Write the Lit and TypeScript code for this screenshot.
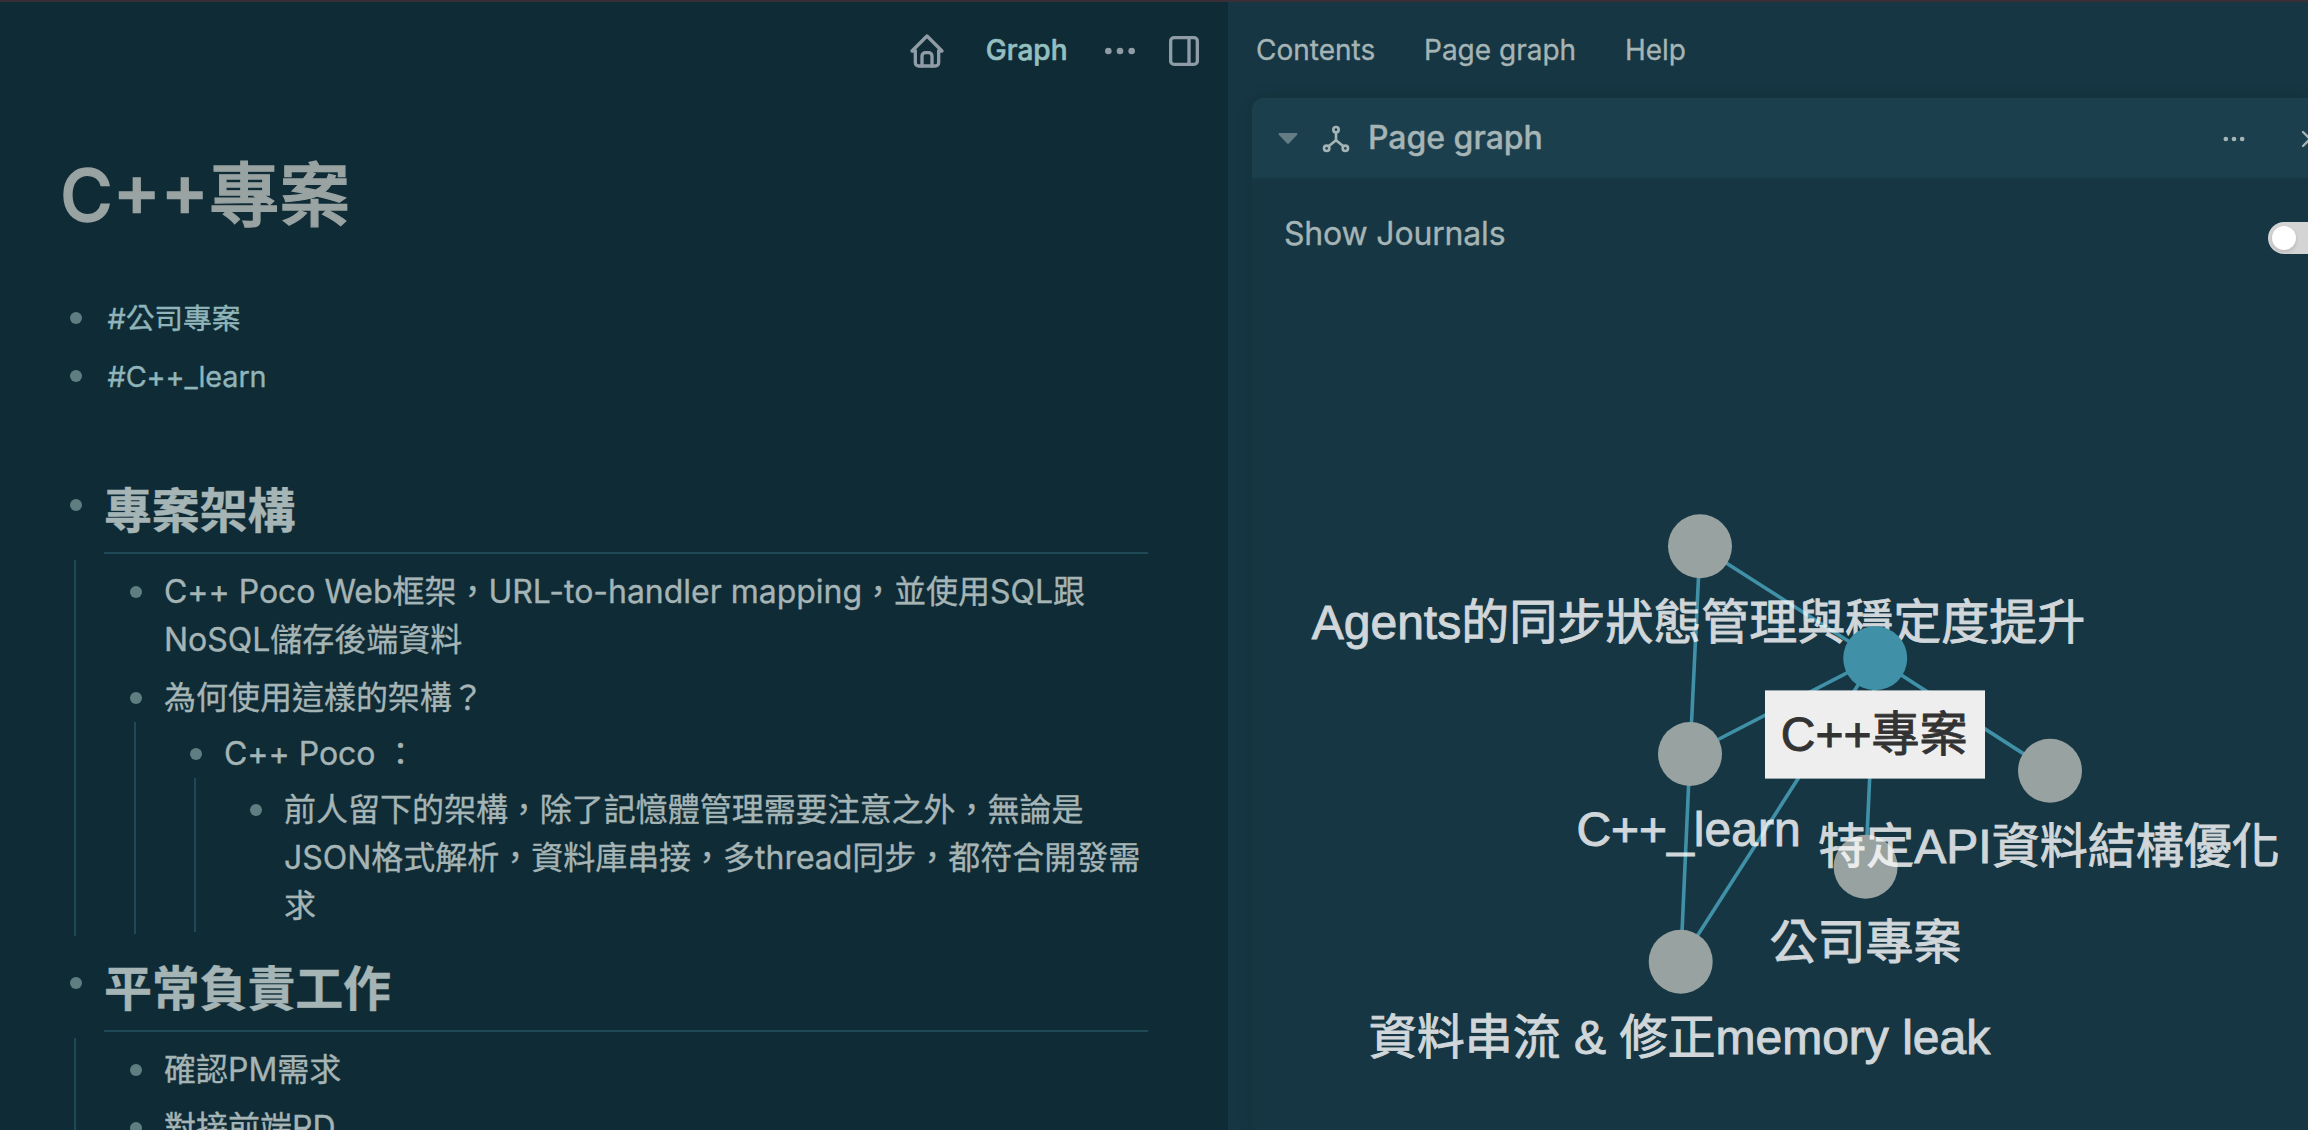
import { LitElement, html, svg, css, nothing, TemplateResult } from "lit";
import { customElement, property } from "lit/decorators.js";

interface Block {
  lines: string[];
  kind?: "text" | "tag" | "heading" | "blank";
  children?: Block[];
}

const BLOCKS: Block[] = [
  { lines: ["#公司專案"], kind: "tag" },
  { lines: ["#C++_learn"], kind: "tag" },
  { lines: [""], kind: "blank" },
  {
    lines: ["專案架構"],
    kind: "heading",
    children: [
      { lines: ["C++ Poco Web框架，URL-to-handler mapping，並使用SQL跟", "NoSQL儲存後端資料"] },
      {
        lines: ["為何使用這樣的架構？"],
        children: [
          {
            lines: ["C++ Poco ："],
            children: [
              {
                lines: [
                  "前人留下的架構，除了記憶體管理需要注意之外，無論是",
                  "JSON格式解析，資料庫串接，多thread同步，都符合開發需",
                  "求",
                ],
              },
            ],
          },
        ],
      },
    ],
  },
  {
    lines: ["平常負責工作"],
    kind: "heading",
    children: [{ lines: ["確認PM需求"] }, { lines: ["對接前端RD"] }],
  },
];

const ICONS: Record<string, TemplateResult> = {
  home: svg`<path d="M5 12H3l9-9 9 9h-2"/><path d="M5 12v7a2 2 0 0 0 2 2h10a2 2 0 0 0 2-2v-7"/><path d="M9 21v-6a2 2 0 0 1 2-2h2a2 2 0 0 1 2 2v6"/>`,
  dots: svg`<circle cx="5" cy="12" r="1"/><circle cx="12" cy="12" r="1"/><circle cx="19" cy="12" r="1"/>`,
  sidebar: svg`<rect x="4" y="4" width="16" height="16" rx="2"/><path d="M15 4v16"/>`,
  hierarchy: svg`<circle cx="12" cy="5" r="2"/><circle cx="5" cy="19" r="2"/><circle cx="19" cy="19" r="2"/><path d="M6.5 17.5 12 13l5.5 4.5M12 7v6"/>`,
  close: svg`<path d="M18 6 6 18M6 6l12 12"/>`,
};

@customElement("line-icon")
class LineIcon extends LitElement {
  @property() name = "dots";
  static styles = css`
    :host { display: block; flex: none; }
    .glyph {
      display: block; width: 100%; height: 100%; fill: none; stroke: currentColor;
      stroke-width: 2; stroke-linecap: round; stroke-linejoin: round;
    }
  `;
  render() {
    return html`<svg class="glyph" viewBox="0 0 24 24">${ICONS[this.name]}</svg>`;
  }
}

interface GraphNode { id: string; x: number; y: number; labelX: number; label: string; }

const NODES: GraphNode[] = [
  { id: "agents", x: 1700, y: 546.3, labelX: 1698.5, label: "Agents的同步狀態管理與穩定度提升" },
  { id: "learn", x: 1690, y: 754, labelX: 1688.5, label: "C++_learn" },
  { id: "api", x: 2050, y: 770.8, labelX: 2049, label: "特定API資料結構優化" },
  { id: "company", x: 1865.6, y: 866.7, labelX: 1865.5, label: "公司專案" },
  { id: "stream", x: 1680.7, y: 961.7, labelX: 1679.5, label: "資料串流 & 修正memory leak" },
];
const FOCUS: GraphNode = { id: "focus", x: 1875.2, y: 658.3, labelX: 1874.2, label: "C++專案" };
const EDGES = [
  ["agents", "focus"], ["agents", "learn"], ["learn", "focus"], ["api", "focus"],
  ["company", "focus"], ["stream", "focus"], ["stream", "learn"],
];

@customElement("page-graph")
class PageGraph extends LitElement {
  static styles = css`
    :host { display: block; overflow: hidden; }
    .canvas { display: block; width: 1056px; height: 842px; }
    .edge { stroke: #4091a7; stroke-width: 3.6; }
    .node { fill: #98a2a1; }
    .node-focus { fill: #4091a7; }
    .label {
      font: 48px "Liberation Sans", "Noto Sans CJK TC", sans-serif;
      text-anchor: middle; fill: #ffffff; stroke: #ffffff; stroke-width: 0.9; opacity: 0.8;
    }
    .label-box { fill: #eeeeee; }
    .label-focus { fill: #333333; stroke: #333333; opacity: 1; }
  `;
  render() {
    const find = (id: string) => [...NODES, FOCUS].find((n) => n.id === id)!;
    return html`<svg class="canvas" viewBox="1252 288 1056 842">
      ${EDGES.map(([a, b]) => {
        const p = find(a), q = find(b);
        return svg`<line class="edge" x1=${p.x} y1=${p.y} x2=${q.x} y2=${q.y}/>`;
      })}
      ${NODES.map((n) => svg`<circle class="node" cx=${n.x} cy=${n.y} r="32"/>`)}
      ${NODES.map((n) => svg`<text class="label" x=${n.labelX} y=${n.y + 92.4}>${n.label}</text>`)}
      <circle class="node-focus" cx=${FOCUS.x} cy=${FOCUS.y} r="32"/>
      <rect class="label-box" x="1765" y="690.4" width="220" height="88.2"/>
      <text class="label label-focus" x=${FOCUS.labelX} y=${FOCUS.y + 92.4}>${FOCUS.label}</text>
    </svg>`;
  }
}

@customElement("app-root")
class AppRoot extends LitElement {
  static styles = css`
    :host {
      display: grid; grid-template-columns: 1228px 1080px; width: 2308px; height: 1130px;
      box-sizing: border-box; border-top: 2px solid #382f36; overflow: hidden;
      background: #0f2b35; color: #a5b4b5;
      font: 32px/48px Inter, "Noto Sans CJK TC", sans-serif;
      -webkit-text-stroke: 0.35px currentColor;
    }
    .main { overflow: hidden; }
    .toolbar {
      display: flex; align-items: center; justify-content: flex-end; box-sizing: border-box;
      height: 98px; padding-right: 24px; color: #8f9ca5;
    }
    .tool { width: 40px; height: 40px; }
    .graph-link { margin: -2px 32.5px 0 38.5px; color: #93bfc1; font-size: 28px; font-weight: 500; -webkit-text-stroke-width: 0.6px; }
    .dots-tool { margin-right: 24px; }
    .page-title {
      margin: 0; padding: 50px 0 0 60px; height: 136px; font-size: 72px; line-height: 90px;
      font-weight: 500; color: #98a3a2; white-space: nowrap;
      -webkit-text-stroke: 1.3px currentColor;
    }
    .title-cjk { font-size: 70.5px; }
    .outline { width: 1104px; padding-left: 44px; }
    .block { padding: 8px 0 2px; }
    .row { display: flex; }
    .gutter { flex: none; width: 60px; height: 48px; display: flex; align-items: center; justify-content: center; }
    .bullet { width: 12px; height: 12px; margin-left: 4px; border-radius: 50%; background: #5f7e82; }
    .content { flex: 1; white-space: nowrap; letter-spacing: -0.02px; }
    .line { height: 48px; }
    .tag { margin-left: 3.5px; font-size: 28.8px; color: #8fb5ba; letter-spacing: -0.1px; }
    .heading {
      margin: 0 0 6px; height: 84px; border-bottom: 2px solid #204957; font-size: 48px;
      line-height: 86px; font-weight: 700; letter-spacing: -0.2px;
    }
    .gutter-heading { padding-top: 13px; }
    .children { margin-left: 30px; border-left: 2px solid #204957; padding-left: 28px; }
    .sidebar { overflow: hidden; background: #153642; }
    .tabs { display: flex; align-items: center; height: 96px; gap: 48.8px; padding-left: 28px; font-size: 28px; white-space: nowrap; }
    .card { margin-left: 24px; height: 1032px; border-radius: 12px 0 0 0; box-shadow: 0 0 18px rgba(0, 0, 0, 0.07); overflow: hidden; }
    .card-wrap { width: 1110px; }
    .card-head { display: flex; align-items: center; height: 80px; background: #1c3f4e; }
    .caret { width: 20px; height: 11px; margin-left: 26px; fill: #647d84; }
    .kind { width: 32px; height: 32px; margin: 2px 16px 0 22px; }
    .card-title { flex: 1; font-weight: 500; letter-spacing: -0.02px; }
    .small { width: 28px; height: 28px; margin-top: 1px; }
    .card-more { margin-right: 48px; }
    .card-close { margin-right: 38px; }
    .setting { display: flex; justify-content: space-between; height: 110px; box-sizing: border-box; padding: 32px 12px 0 32px; letter-spacing: -0.18px; }
    .switch { width: 64px; height: 32px; box-sizing: border-box; margin: 12px 18px 0 0; padding: 4px; border-radius: 16px; background: #d4d4d4; }
    .knob { width: 24px; height: 24px; border-radius: 50%; background: #ffffff; box-shadow: 0 2px 4px rgba(0, 0, 0, 0.14); }
  `;

  private block(b: Block): TemplateResult {
    const heading = b.kind === "heading";
    return html`<div class="block">
      <div class="row">
        <div class="gutter ${heading ? "gutter-heading" : ""}">
          ${b.kind === "blank" ? nothing : html`<div class="bullet"></div>`}
        </div>
        <div class="content">
          ${heading
            ? html`<h2 class="heading">${b.lines[0]}</h2>`
            : b.lines.map((l) => html`<div class="line">${b.kind === "tag" ? html`<a class="tag">${l}</a>` : l}</div>`)}
        </div>
      </div>
      ${b.children ? html`<div class="children">${b.children.map((c) => this.block(c))}</div>` : nothing}
    </div>`;
  }

  render() {
    return html`
      <main class="main">
        <div class="toolbar">
          <line-icon class="tool" name="home"></line-icon>
          <span class="graph-link">Graph</span>
          <line-icon class="tool dots-tool" name="dots"></line-icon>
          <line-icon class="tool" name="sidebar"></line-icon>
        </div>
        <h1 class="page-title">C++<span class="title-cjk">專案</span></h1>
        <div class="outline">${BLOCKS.map((b) => this.block(b))}</div>
      </main>
      <aside class="sidebar">
        <nav class="tabs"><span>Contents</span><span>Page graph</span><span>Help</span></nav>
        <section class="card">
          <div class="card-head card-wrap">
            <svg class="caret" viewBox="0 0 20 11"><path d="M1.5 0h17q1.6.4.6 1.8l-8.2 8.6q-.9.8-1.8 0L.9 1.8Q-.1.4 1.5 0z"/></svg>
            <line-icon class="kind" name="hierarchy"></line-icon>
            <span class="card-title">Page graph</span>
            <line-icon class="small card-more" name="dots"></line-icon>
            <line-icon class="small card-close" name="close"></line-icon>
          </div>
          <div class="setting card-wrap">
            <span>Show Journals</span>
            <div class="switch"><div class="knob"></div></div>
          </div>
          <page-graph></page-graph>
        </section>
      </aside>
    `;
  }
}
